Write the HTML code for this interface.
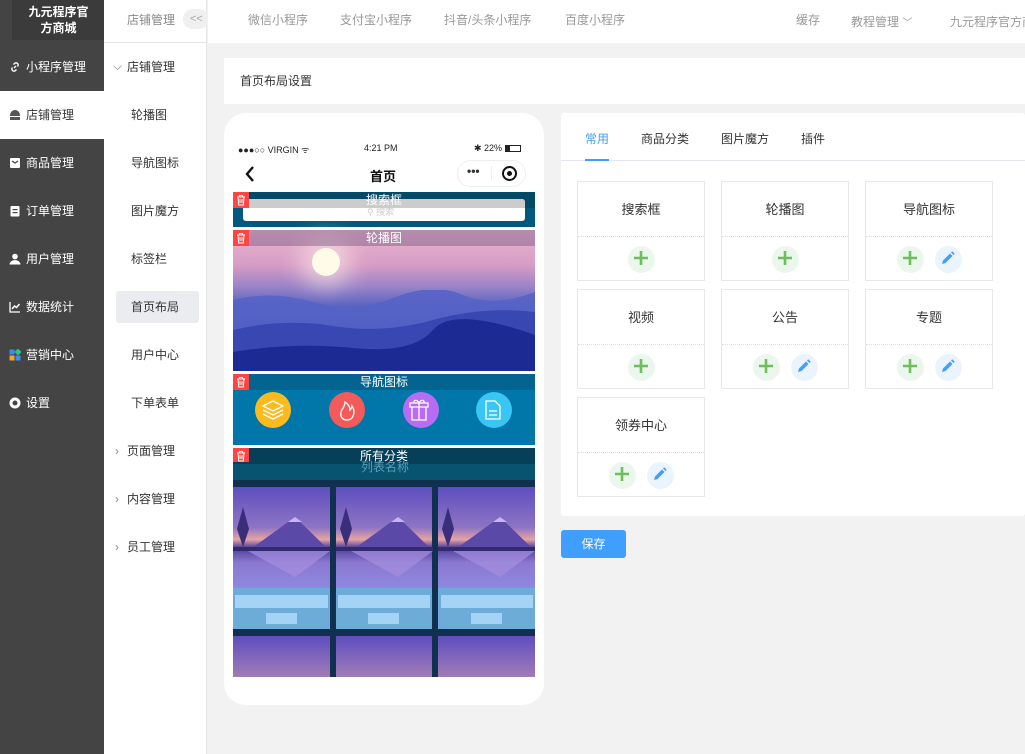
<!DOCTYPE html>
<html><head><meta charset="utf-8"><style>
*{margin:0;padding:0;box-sizing:border-box}
body{width:1025px;height:754px;overflow:hidden;background:#f2f2f2;font-family:"Liberation Sans","Noto Sans CJK SC",sans-serif;font-size:12px;color:#333;position:relative}
.a{position:absolute}
.side{left:0;top:0;width:104px;height:754px;background:#444}
.logo{left:12px;top:0;width:93px;height:40px;background:#3b3b3b;color:#fff;font-weight:bold;font-size:12px;text-align:center;line-height:16px;padding-top:4px}
.mi{left:0;width:104px;height:48px;color:#fff;font-size:12px;line-height:48px;padding-left:26px}
.mi.act{background:#fff;color:#333}
.ic{position:absolute;left:9px;top:18px;width:12px;height:12px}
.side2{left:104px;top:0;width:103px;height:754px;background:#fff;border-right:1px solid #e6e6e6}
.s2{left:104px;width:103px;height:48px;line-height:48px;font-size:12px;color:#333}
.top{left:208px;top:0;width:817px;height:43px;background:#fff}
.tn{top:0;line-height:40px;color:#999;font-size:12px}
.card{background:#fff}
.blk{background:#fff;border:1px solid #e8e8e8;width:128px;height:100px}
.blk .t{position:absolute;top:0;left:0;width:126px;height:55px;line-height:55px;text-align:center;font-size:13px;color:#333;border-bottom:1px dotted #ddd}
.btn{position:absolute;top:64px;width:27px;height:27px;border-radius:50%}
.plus{background:#ebf7ec}
.pen{background:#eaf4ff}
.bar{left:233px;width:302px;color:#fff;text-align:center;font-size:12px;line-height:16px}
</style></head><body>
<div class="a side"></div>
<div class="a logo">九元程序官<br>方商城</div>
<div class="a mi" style="top:43px"><svg class="ic" viewBox="0 0 12 12"><path d="M5 7L7 5M3.5 6.5a2 2 0 0 0 0 3 2 2 0 0 0 3 0l1-1M8.5 5.5a2 2 0 0 0 0-3 2 2 0 0 0-3 0l-1 1" stroke="#fff" stroke-width="1.4" fill="none"/></svg>小程序管理</div>
<div class="a mi act" style="top:91px"><svg class="ic" viewBox="0 0 12 12"><path d="M1 11V6a5 5 0 0 1 10 0v5z" fill="#555"/><rect x="1" y="7" width="10" height="1" fill="#fff"/></svg>店铺管理</div>
<div class="a mi" style="top:139px"><svg class="ic" viewBox="0 0 12 12"><rect x="1" y="1" width="10" height="10" rx="1" fill="#fff"/><path d="M3 4l3 2 3-2" stroke="#444" stroke-width="1.3" fill="none"/></svg>商品管理</div>
<div class="a mi" style="top:187px"><svg class="ic" viewBox="0 0 12 12"><rect x="1.5" y="1" width="9" height="10.5" rx="1" fill="#fff"/><rect x="3.5" y="4" width="5" height="1.2" fill="#444"/><rect x="3.5" y="7" width="5" height="1.2" fill="#444"/></svg>订单管理</div>
<div class="a mi" style="top:235px"><svg class="ic" viewBox="0 0 12 12"><circle cx="6" cy="3.5" r="2.8" fill="#fff"/><path d="M0.5 11.5a5.5 4.5 0 0 1 11 0z" fill="#fff"/></svg>用户管理</div>
<div class="a mi" style="top:283px"><svg class="ic" viewBox="0 0 12 12"><path d="M1 1v10h10" stroke="#fff" stroke-width="1.3" fill="none"/><path d="M3 8l2.5-3 2 1.5L10.5 3" stroke="#fff" stroke-width="1.5" fill="none"/></svg>数据统计</div>
<div class="a mi" style="top:331px"><svg class="ic" viewBox="0 0 12 12"><rect x="0.5" y="0.5" width="5" height="5" fill="#3b8cf5"/><rect x="6.5" y="0.5" width="5" height="5" fill="#2bc48a" transform="rotate(45 9 3)"/><rect x="0.5" y="6.5" width="5" height="5" fill="#f5a623"/><rect x="6.5" y="6.5" width="5" height="5" fill="#3b8cf5"/></svg>营销中心</div>
<div class="a mi" style="top:379px"><svg class="ic" viewBox="0 0 12 12"><circle cx="6" cy="6" r="4" stroke="#fff" stroke-width="3" fill="none"/></svg>设置</div>

<div class="a side2"></div>
<div class="a" style="left:104px;top:42px;width:103px;height:1px;background:#e6e6e6"></div>
<div class="a" style="left:127px;top:11px;color:#888;font-size:12px">店铺管理</div>
<div class="a" style="left:183px;top:9px;width:26px;height:20px;background:#f0f0f0;border-radius:10px;color:#aaa;font-size:11px;line-height:20px;padding-left:7px">&lt;&lt;</div>
<div class="a s2" style="top:43px;padding-left:23px"><span class="a" style="left:9px;top:-1px;color:#888">⌵</span>店铺管理</div>
<div class="a s2" style="top:91px;padding-left:27px">轮播图</div>
<div class="a s2" style="top:139px;padding-left:27px">导航图标</div>
<div class="a s2" style="top:187px;padding-left:27px">图片魔方</div>
<div class="a s2" style="top:235px;padding-left:27px">标签栏</div>
<div class="a" style="left:116px;top:291px;width:83px;height:32px;background:#ebecef;border-radius:3px;line-height:32px;padding-left:15px">首页布局</div>
<div class="a s2" style="top:331px;padding-left:27px">用户中心</div>
<div class="a s2" style="top:379px;padding-left:27px">下单表单</div>
<div class="a s2" style="top:427px;padding-left:23px"><span class="a" style="left:11px;top:0;color:#888">›</span>页面管理</div>
<div class="a s2" style="top:475px;padding-left:23px"><span class="a" style="left:11px;top:0;color:#888">›</span>内容管理</div>
<div class="a s2" style="top:523px;padding-left:23px"><span class="a" style="left:11px;top:0;color:#888">›</span>员工管理</div>

<div class="a top"></div>
<div class="a tn" style="left:248px">微信小程序</div>
<div class="a tn" style="left:340px">支付宝小程序</div>
<div class="a tn" style="left:444px">抖音/头条小程序</div>
<div class="a tn" style="left:565px">百度小程序</div>
<div class="a tn" style="left:796px">缓存</div>
<div class="a tn" style="left:851px;top:2px">教程管理 <span style="font-size:10px">﹀</span></div>
<div class="a tn" style="left:950px;top:2px;white-space:nowrap">九元程序官方商城</div>

<div class="a card" style="left:224px;top:58px;width:801px;height:46px;line-height:46px;padding-left:16px;font-size:12px">首页布局设置</div>

<div class="a" style="left:224px;top:113px;width:320px;height:592px;background:#fff;border-radius:22px"></div>
<div class="a" style="left:238px;top:143px;font-size:9px;color:#222">●●●○○ VIRGIN ᯤ</div>
<div class="a" style="left:364px;top:143px;font-size:9px;color:#222">4:21 PM</div>
<div class="a" style="left:474px;top:143px;font-size:9px;color:#222">✱ 22% <span style="display:inline-block;width:16px;height:7px;border:1px solid #222;vertical-align:-1px;background:linear-gradient(90deg,#222 30%,#fff 30%)"></span></div>
<svg class="a" style="left:244px;top:165px" width="12" height="18" viewBox="0 0 12 18"><path d="M9 2L3 9l6 7" stroke="#111" stroke-width="2.4" fill="none"/></svg>
<div class="a" style="left:370px;top:166px;font-size:13px;font-weight:bold;color:#111">首页</div>
<div class="a" style="left:457px;top:160px;width:69px;height:27px;border:1px solid #eee;border-radius:14px"></div>
<div class="a" style="left:467px;top:164px;font-size:12px;font-weight:bold">•••</div>
<div class="a" style="left:491px;top:166px;width:1px;height:14px;background:#eee"></div>
<div class="a" style="left:502px;top:166px;width:15px;height:15px;border:2px solid #111;border-radius:50%"></div>
<div class="a" style="left:507px;top:171px;width:5px;height:5px;background:#111;border-radius:50%"></div>

<div class="a" style="left:233px;top:192px;width:302px;height:35px;background:#03597d"></div>
<div class="a" style="left:233px;top:192px;width:302px;height:16px;background:#044a66"></div>
<div class="a" style="left:243px;top:199px;width:282px;height:22px;background:#fff;border-radius:3px"></div>
<div class="a" style="left:243px;top:199px;width:282px;height:9px;background:#ccc;border-radius:3px 3px 0 0"></div>
<div class="a" style="left:367px;top:205px;font-size:9px;color:#ccc">⚲ 搜索</div>
<div class="a bar" style="top:192px">搜索框</div>

<div class="a" style="left:233px;top:230px;width:302px;height:141px;background:linear-gradient(180deg,#e8b7cf 0%,#d79cc4 25%,#9a84c8 40%,#5560c0 55%,#3345b0 70%,#1a2a95 85%,#0a1460 100%)"></div>
<div class="a" style="left:312px;top:248px;width:28px;height:28px;border-radius:50%;background:#fffbe8;box-shadow:0 0 22px 12px rgba(255,235,230,.6)"></div>
<svg class="a" style="left:233px;top:290px" width="302" height="81" viewBox="0 0 302 81"><path d="M0 10Q40 0 80 12T160 8T230 5T302 2V81H0z" fill="#5563c6" opacity=".9"/><path d="M0 40Q50 28 100 36T200 30T302 22V81H0z" fill="#3847b2"/><path d="M0 62Q60 52 120 58T200 40T302 45V81H0z" fill="#1c2a94"/></svg>
<div class="a" style="left:233px;top:230px;width:302px;height:16px;background:rgba(90,60,110,.35)"></div>
<div class="a bar" style="top:230px">轮播图</div>

<div class="a" style="left:233px;top:374px;width:302px;height:71px;background:#0077a8"></div>
<div class="a" style="left:233px;top:374px;width:302px;height:16px;background:#03658f"></div>
<div class="a bar" style="top:374px">导航图标</div>
<div class="a" style="left:255px;top:392px;width:36px;height:36px;border-radius:50%;background:#fbbb1e"></div>
<div class="a" style="left:329px;top:392px;width:36px;height:36px;border-radius:50%;background:#f35b5b"></div>
<div class="a" style="left:403px;top:392px;width:36px;height:36px;border-radius:50%;background:#b86cf4"></div>
<div class="a" style="left:476px;top:392px;width:36px;height:36px;border-radius:50%;background:#39c6f4"></div>
<svg class="a" style="left:255px;top:392px" width="258" height="36" viewBox="0 0 258 36" fill="none" stroke="#fff" stroke-width="1.3"><path d="M8 14l10-5 10 5-10 5z M8 18l10 5 10-5 M8 22l10 5 10-5"/><path d="M92 28c-5 0-7-4-6-8s4-5 4-10c3 2 5 5 5 8 1-1 2-3 2-4 2 3 3 6 1 10-1 3-3 4-6 4z"/><path d="M157 15h14v13h-14z M155 11h18v4h-18z M164 11v17 M164 11c-2-4-6-3-5 0 M164 11c2-4 6-3 5 0"/><path d="M231 9h9l5 5v13h-14z M234 19h8 M234 23h8"/></svg>

<div class="a" style="left:233px;top:448px;width:302px;height:229px;background:#11304f"></div>
<div class="a" style="left:233px;top:448px;width:302px;height:16px;background:#063f57"></div>
<div class="a" style="left:233px;top:464px;width:302px;height:16px;background:#085370"></div>
<div class="a" style="left:361px;top:458px;font-size:12px;color:#5d9fb8">列表名称</div>
<div class="a bar" style="top:448px">所有分类</div>
<div class="a" style="left:233px;top:487px;width:97px;height:101px;background:linear-gradient(180deg,#5f4ebf 0%,#8d75c4 40%,#e8a3a4 52%,#4b3f9a 60%,#8b78d0 75%,#8e88e0 100%)"></div>
<div class="a" style="left:336px;top:487px;width:96px;height:101px;background:linear-gradient(180deg,#5f4ebf 0%,#8d75c4 40%,#e8a3a4 52%,#4b3f9a 60%,#8b78d0 75%,#8e88e0 100%)"></div>
<div class="a" style="left:438px;top:487px;width:97px;height:101px;background:linear-gradient(180deg,#5f4ebf 0%,#8d75c4 40%,#e8a3a4 52%,#4b3f9a 60%,#8b78d0 75%,#8e88e0 100%)"></div>
<svg class="a" style="left:233px;top:487px" width="302" height="101" viewBox="0 0 302 101"><g id="m"><path d="M15 64L62 30 97 64z" fill="#5b49a8"/><path d="M55 35l7-5 7 5z" fill="#c9b3f5"/><path d="M10 20l-6 22 6 18 6-18z" fill="#3a2e7a"/><path d="M0 60h97v4H0z" fill="#33296e"/><path d="M15 64L62 90 97 64z" fill="#a58ee0" opacity=".7"/></g><use href="#m" x="103"/><use href="#m" x="205"/></svg>
<div class="a" style="left:233px;top:588px;width:97px;height:41px;background:#6dabd8"></div>
<div class="a" style="left:336px;top:588px;width:96px;height:41px;background:#6dabd8"></div>
<div class="a" style="left:438px;top:588px;width:97px;height:41px;background:#6dabd8"></div>
<div class="a" style="left:235px;top:595px;width:93px;height:13px;background:#a5d3f5"></div>
<div class="a" style="left:338px;top:595px;width:92px;height:13px;background:#a5d3f5"></div>
<div class="a" style="left:441px;top:595px;width:92px;height:13px;background:#a5d3f5"></div>
<div class="a" style="left:266px;top:613px;width:31px;height:11px;background:#a5d3f5"></div>
<div class="a" style="left:368px;top:613px;width:31px;height:11px;background:#a5d3f5"></div>
<div class="a" style="left:471px;top:613px;width:31px;height:11px;background:#a5d3f5"></div>
<div class="a" style="left:233px;top:636px;width:97px;height:41px;background:linear-gradient(180deg,#5f4ebf,#a07cb5)"></div>
<div class="a" style="left:336px;top:636px;width:96px;height:41px;background:linear-gradient(180deg,#5f4ebf,#a07cb5)"></div>
<div class="a" style="left:438px;top:636px;width:97px;height:41px;background:linear-gradient(180deg,#5f4ebf,#a07cb5)"></div>

<svg class="a" style="left:233px;top:192px" width="16" height="270" viewBox="0 0 16 270"><g id="tr"><rect width="16" height="16" fill="#f44"/><path d="M4 5h8M6.5 5V3.5h3V5M5 5l.7 8h4.6L11 5M7 7v4M9 7v4" stroke="#fff" stroke-width="1" fill="none"/></g><use href="#tr" y="38"/><use href="#tr" y="182"/><use href="#tr" y="256"/></svg>

<div class="a card" style="left:561px;top:113px;width:464px;height:403px;border-radius:3px"></div>
<div class="a" style="left:561px;top:160px;width:464px;height:1px;background:#e4e7ed"></div>
<div class="a" style="left:585px;top:130px;color:#409eff;font-size:12px">常用</div>
<div class="a" style="left:585px;top:159px;width:24px;height:2px;background:#409eff"></div>
<div class="a" style="left:641px;top:130px;font-size:12px">商品分类</div>
<div class="a" style="left:721px;top:130px;font-size:12px">图片魔方</div>
<div class="a" style="left:801px;top:130px;font-size:12px">插件</div>

<div class="a blk" style="left:577px;top:181px"><div class="t">搜索框</div><div class="btn plus" style="left:50px"></div></div>
<div class="a blk" style="left:721px;top:181px"><div class="t">轮播图</div><div class="btn plus" style="left:50px"></div></div>
<div class="a blk" style="left:865px;top:181px"><div class="t">导航图标</div><div class="btn plus" style="left:31px"></div><div class="btn pen" style="left:69px"></div></div>
<div class="a blk" style="left:577px;top:289px"><div class="t">视频</div><div class="btn plus" style="left:50px"></div></div>
<div class="a blk" style="left:721px;top:289px"><div class="t">公告</div><div class="btn plus" style="left:31px"></div><div class="btn pen" style="left:69px"></div></div>
<div class="a blk" style="left:865px;top:289px"><div class="t">专题</div><div class="btn plus" style="left:31px"></div><div class="btn pen" style="left:69px"></div></div>
<div class="a blk" style="left:577px;top:397px"><div class="t">领券中心</div><div class="btn plus" style="left:31px"></div><div class="btn pen" style="left:69px"></div></div>
<svg class="a" style="left:0;top:0" width="1025" height="754" viewBox="0 0 1025 754" pointer-events="none">
<defs><g id="pl"><path d="M-7 0h14M0-7v14" stroke="#6cbf5c" stroke-width="2.6"/></g><g id="pn"><path d="M-6 6l1-3.5 7-7 2.5 2.5-7 7z" fill="#409eff"/><path d="M3-5.5l1.2-1.2 2.5 2.5-1.2 1.2z" fill="#409eff"/></g></defs>
<use href="#pl" x="641" y="258"/><use href="#pl" x="785" y="258"/><use href="#pl" x="910" y="258"/><use href="#pn" x="948" y="258"/>
<use href="#pl" x="641" y="366"/><use href="#pl" x="766" y="366"/><use href="#pn" x="804" y="366"/><use href="#pl" x="910" y="366"/><use href="#pn" x="948" y="366"/>
<use href="#pl" x="622" y="474"/><use href="#pn" x="660" y="474"/>
</svg>
<div class="a" style="left:561px;top:530px;width:65px;height:28px;background:#409eff;border-radius:3px;color:#fff;text-align:center;line-height:28px;font-size:12px">保存</div>
</body></html>
